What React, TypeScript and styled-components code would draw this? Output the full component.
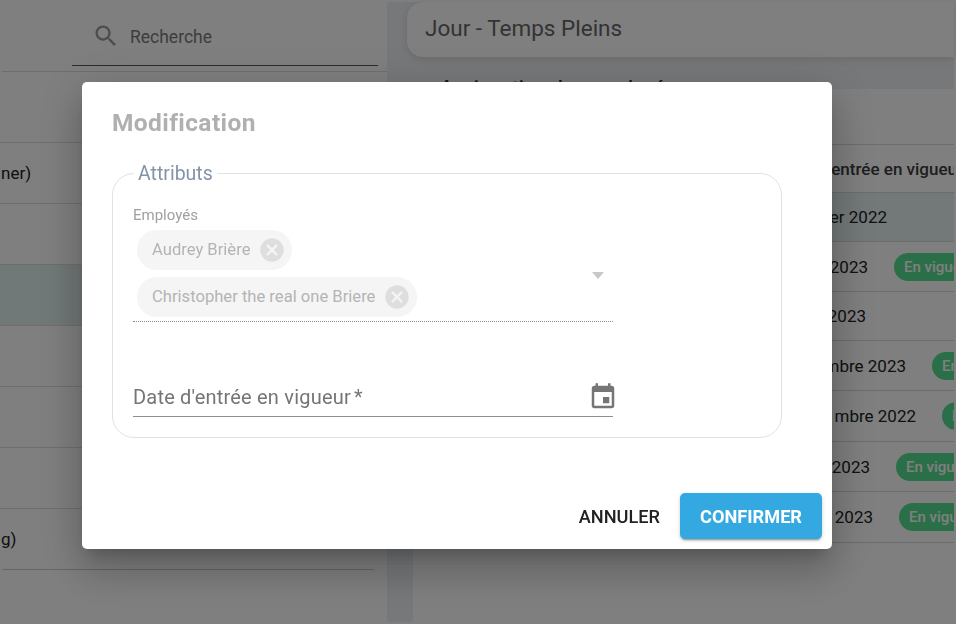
import React from "react";
import styled, { createGlobalStyle } from "styled-components";

const GlobalStyle = createGlobalStyle`
  html, body {
    margin: 0;
    padding: 0;
    height: 100%;
    background: #fff;
    font-family: Roboto, "Noto Sans", sans-serif;
    overflow: hidden;
  }
  * { box-sizing: border-box; }
`;

/* page behind the modal */
const Page = styled.div`
  display: flex;
  width: 956px;
  height: 624px;
  padding: 2px 2px 2px 0;
  background: #fff;
  overflow: hidden;
`;

const LeftPanel = styled.div`
  width: 387px;
  flex: none;
  background: #fff;
  border-top-right-radius: 16px;
  display: flex;
  flex-direction: column;
  overflow: hidden;
  z-index: 1;
`;

const SearchBar = styled.div`
  height: 64px;
  margin-left: 72px;
  margin-right: 9px;
  padding: 4px 0 0 20px;
  display: flex;
  align-items: center;
  gap: 10px;
  border-bottom: 1px solid #555;
  font-size: 17.5px;
  color: #7a7a7a;
`;

const SearchText = styled.span`
  padding-top: 3px;
`;

const ListHead = styled.div`
  height: 71px;
  margin-top: 5px;
  margin-left: 2px;
  border-top: 1px solid #ddd;
`;

const ListRow = styled.div<{ $selected?: boolean }>`
  height: 61px;
  display: flex;
  align-items: center;
  padding-left: 1px;
  background: ${(p) => (p.$selected ? "#e3f0f0" : "transparent")};
  border-top: 1px solid #ddd;
  font-size: 17px;
  color: #222;
  white-space: nowrap;
`;

const LastLine = styled.div`
  margin-left: 2px;
  margin-right: 13px;
  border-top: 1px solid #ccc;
`;

const RightColumn = styled.div`
  flex: 1;
  min-width: 0;
  display: flex;
  flex-direction: column;
  background: #edf0f4;
`;

const Header = styled.div`
  height: 55px;
  margin-left: 20px;
  padding: 0 0 4px 18px;
  flex: none;
  display: flex;
  align-items: center;
  background: #fff;
  border-radius: 16px 0 0 16px;
  box-shadow: 0 2px 8px rgba(0, 0, 0, 0.12);
  font-size: 22.5px;
  color: #666;
  z-index: 2;
`;

const SubTitle = styled.div`
  height: 32px;
  flex: none;
  padding: 19px 0 0 53px;
  font-size: 20px;
  font-weight: 500;
  line-height: 24px;
  color: #333;
  overflow: hidden;
  white-space: nowrap;
`;

const TablePanel = styled.div`
  flex: 1;
  margin-left: 26px;
  background: #fff;
  overflow: hidden;
`;

const TableHead = styled.div`
  height: 55px;
`;

const TableRow = styled.div<{ $header?: boolean; $tinted?: boolean; $height: number }>`
  height: ${(p) => p.$height}px;
  display: flex;
  align-items: center;
  border-top: 1px solid #d8d8d8;
  background: ${(p) => (p.$tinted ? "#e6f1f1" : "transparent")};
  font-size: 17px;
  font-weight: ${(p) => (p.$header ? 500 : 400)};
  color: ${(p) => (p.$header ? "#3c3c3c" : "#222")};
  white-space: nowrap;
  overflow: hidden;
`;

const DateCell = styled.div<{ $end: number }>`
  width: ${(p) => p.$end}px;
  flex: none;
  text-align: right;
`;

const StatusPill = styled.span`
  margin-left: 26px;
  flex: none;
  height: 28px;
  padding: 0 10px;
  display: inline-flex;
  align-items: center;
  border-radius: 14px;
  background: #57df91;
  color: #fff;
  font-size: 15px;
  font-weight: 500;
`;

/* modal */
const Overlay = styled.div`
  position: fixed;
  inset: 0;
  z-index: 10;
  background: rgba(0, 0, 0, 0.5);
  display: flex;
  align-items: flex-start;
  justify-content: flex-start;
  padding: 82px 0 0 82px;
`;

const Dialog = styled.div`
  width: 750px;
  height: 467px;
  background: #fff;
  border-radius: 5px;
  box-shadow: 0 11px 15px -7px rgba(0, 0, 0, 0.2), 0 24px 38px 3px rgba(0, 0, 0, 0.14),
    0 9px 46px 8px rgba(0, 0, 0, 0.12);
  padding: 27px 10px 10px 30px;
  display: flex;
  flex-direction: column;
`;

const Title = styled.h2`
  margin: 0;
  height: 28px;
  line-height: 28px;
  font-size: 24.5px;
  font-weight: 700;
  letter-spacing: 0.4px;
  color: #b0b0b0;
`;

const Attributes = styled.fieldset`
  margin: 23px 0 0;
  width: 670px;
  height: 278px;
  padding: 0 20px;
  border: 1px solid #dde3ea;
  border-radius: 22px;
  min-inline-size: 0;
`;

const Legend = styled.legend`
  margin-left: 1px;
  padding: 2px 4px 0;
  font-size: 19.5px;
  line-height: 24px;
  color: #8494a8;
`;

const SelectField = styled.div`
  width: 480px;
  margin-top: 21px;
  position: relative;
  border-bottom: 1px dotted #8a8a8a;
  padding-bottom: 4px;
`;

const FieldLabel = styled.div`
  font-size: 15px;
  line-height: 16px;
  color: #a0a0a0;
`;

const ChipList = styled.div`
  display: flex;
  flex-direction: column;
  align-items: flex-start;
  gap: 7px;
  margin: 7px 0 0 4px;
`;

const Chip = styled.div`
  height: 40px;
  padding: 0 6px 0 15px;
  display: inline-flex;
  align-items: center;
  gap: 8px;
  border-radius: 20px;
  background: #f5f5f5;
  font-size: 16.6px;
  color: #b4b4b4;
  svg { display: block; }
`;

const ChipLabel = styled.span`
  padding-bottom: 2px;
`;

const Caret = styled.span`
  position: absolute;
  right: 9px;
  top: 65px;
  width: 0;
  height: 0;
  border-left: 6px solid transparent;
  border-right: 6px solid transparent;
  border-top: 7px solid #c8c8c8;
`;

const DateField = styled.div`
  width: 480px;
  height: 52px;
  margin-top: 43px;
  padding-top: 12px;
  display: flex;
  align-items: center;
  justify-content: space-between;
  border-bottom: 1px solid #8f8f8f;
  font-size: 20px;
  letter-spacing: 0.2px;
  color: #757575;
  svg { display: block; margin-right: -5px; }
`;

const Asterisk = styled.span`
  margin-left: 3px;
`;

const Actions = styled.div`
  margin-top: auto;
  display: flex;
  align-items: center;
  justify-content: flex-end;
  gap: 20px;
`;

const CancelButton = styled.button`
  border: 0;
  background: none;
  padding: 0;
  font: 500 18.2px Roboto, sans-serif;
  color: #222;
`;

const ConfirmButton = styled.button`
  width: 142px;
  height: 46px;
  border: 0;
  border-radius: 5px;
  background: #34a9e1;
  color: #fff;
  font: 700 18.2px Roboto, sans-serif;
  box-shadow: 0 3px 1px -2px rgba(0, 0, 0, 0.2), 0 2px 2px 0 rgba(0, 0, 0, 0.14),
    0 1px 5px 0 rgba(0, 0, 0, 0.12);
`;

const SearchIcon = () => (
  <svg width="28" height="28" viewBox="0 0 24 24" fill="#9a9a9a">
    <path d="M15.5 14h-.79l-.28-.27C15.41 12.59 16 11.11 16 9.5 16 5.91 13.09 3 9.5 3S3 5.91 3 9.5 5.91 16 9.5 16c1.61 0 3.09-.59 4.23-1.57l.27.28v.79l5 4.99L20.49 19l-4.99-5zm-6 0C7.01 14 5 11.99 5 9.5S7.01 5 9.5 5 14 7.01 14 9.5 11.99 14 9.5 14z" />
  </svg>
);

const CancelIcon = () => (
  <svg width="28" height="28" viewBox="0 0 24 24" fill="#dedede">
    <path d="M12 2C6.47 2 2 6.47 2 12s4.47 10 10 10 10-4.47 10-10S17.53 2 12 2zm5 13.59L15.59 17 12 13.41 8.41 17 7 15.59 10.59 12 7 8.41 8.41 7 12 10.59 15.59 7 17 8.41 13.41 12 17 15.59z" />
  </svg>
);

const EventIcon = () => (
  <svg width="30" height="30" viewBox="0 0 24 24" fill="#757575">
    <path d="M17 12h-5v5h5v-5zM16 1v2H8V1H6v2H5c-1.11 0-1.99.9-1.99 2L3 19c0 1.1.89 2 2 2h14c1.1 0 2-.9 2-2V5c0-1.1-.9-2-2-2h-1V1h-2zm3 18H5V8h14v11z" />
  </svg>
);

// only the part of each date that shows beside the modal
const rows = [
  { id: 1, date: "er 2022", end: 474, height: 49, tinted: true },
  { id: 2, date: "2023", end: 455, height: 50, active: true },
  { id: 3, date: "2023", end: 453, height: 49 },
  { id: 4, date: "mbre 2023", end: 493, height: 50, active: true },
  { id: 5, date: "mbre 2022", end: 503, height: 51, active: true },
  { id: 6, date: "2023", end: 457, height: 50, active: true },
  { id: 7, date: "2023", end: 460, height: 51, active: true },
];

export default function App() {
  return (
    <>
      <GlobalStyle />
      <Page>
        <LeftPanel>
          <SearchBar>
            <SearchIcon />
            <SearchText>Recherche</SearchText>
          </SearchBar>
          <ListHead />
          <ListRow>ner)</ListRow>
          <ListRow />
          <ListRow $selected />
          <ListRow />
          <ListRow />
          <ListRow />
          <ListRow>g)</ListRow>
          <LastLine />
        </LeftPanel>
        <RightColumn>
          <Header>Jour - Temps Pleins</Header>
          <SubTitle>Assignation des employés</SubTitle>
          <TablePanel>
            <TableHead />
            <TableRow $header $height={48}>
              <DateCell $end={550}>entrée en vigueur</DateCell>
            </TableRow>
            {rows.map((r) => (
              <TableRow key={r.id} $height={r.height} $tinted={r.tinted}>
                <DateCell $end={r.end}>{r.date}</DateCell>
                {r.active && <StatusPill>En vigueur</StatusPill>}
              </TableRow>
            ))}
            <TableRow $height={1} />
          </TablePanel>
        </RightColumn>
      </Page>
      <Overlay>
        <Dialog>
          <Title>Modification</Title>
          <Attributes>
            <Legend>Attributs</Legend>
            <SelectField>
              <FieldLabel>Employés</FieldLabel>
              <ChipList>
                <Chip>
                  <ChipLabel>Audrey Brière</ChipLabel>
                  <CancelIcon />
                </Chip>
                <Chip>
                  <ChipLabel>Christopher the real one Briere</ChipLabel>
                  <CancelIcon />
                </Chip>
              </ChipList>
              <Caret />
            </SelectField>
            <DateField>
              <span>
                Date d'entrée en vigueur<Asterisk>*</Asterisk>
              </span>
              <EventIcon />
            </DateField>
          </Attributes>
          <Actions>
            <CancelButton>ANNULER</CancelButton>
            <ConfirmButton>CONFIRMER</ConfirmButton>
          </Actions>
        </Dialog>
      </Overlay>
    </>
  );
}
